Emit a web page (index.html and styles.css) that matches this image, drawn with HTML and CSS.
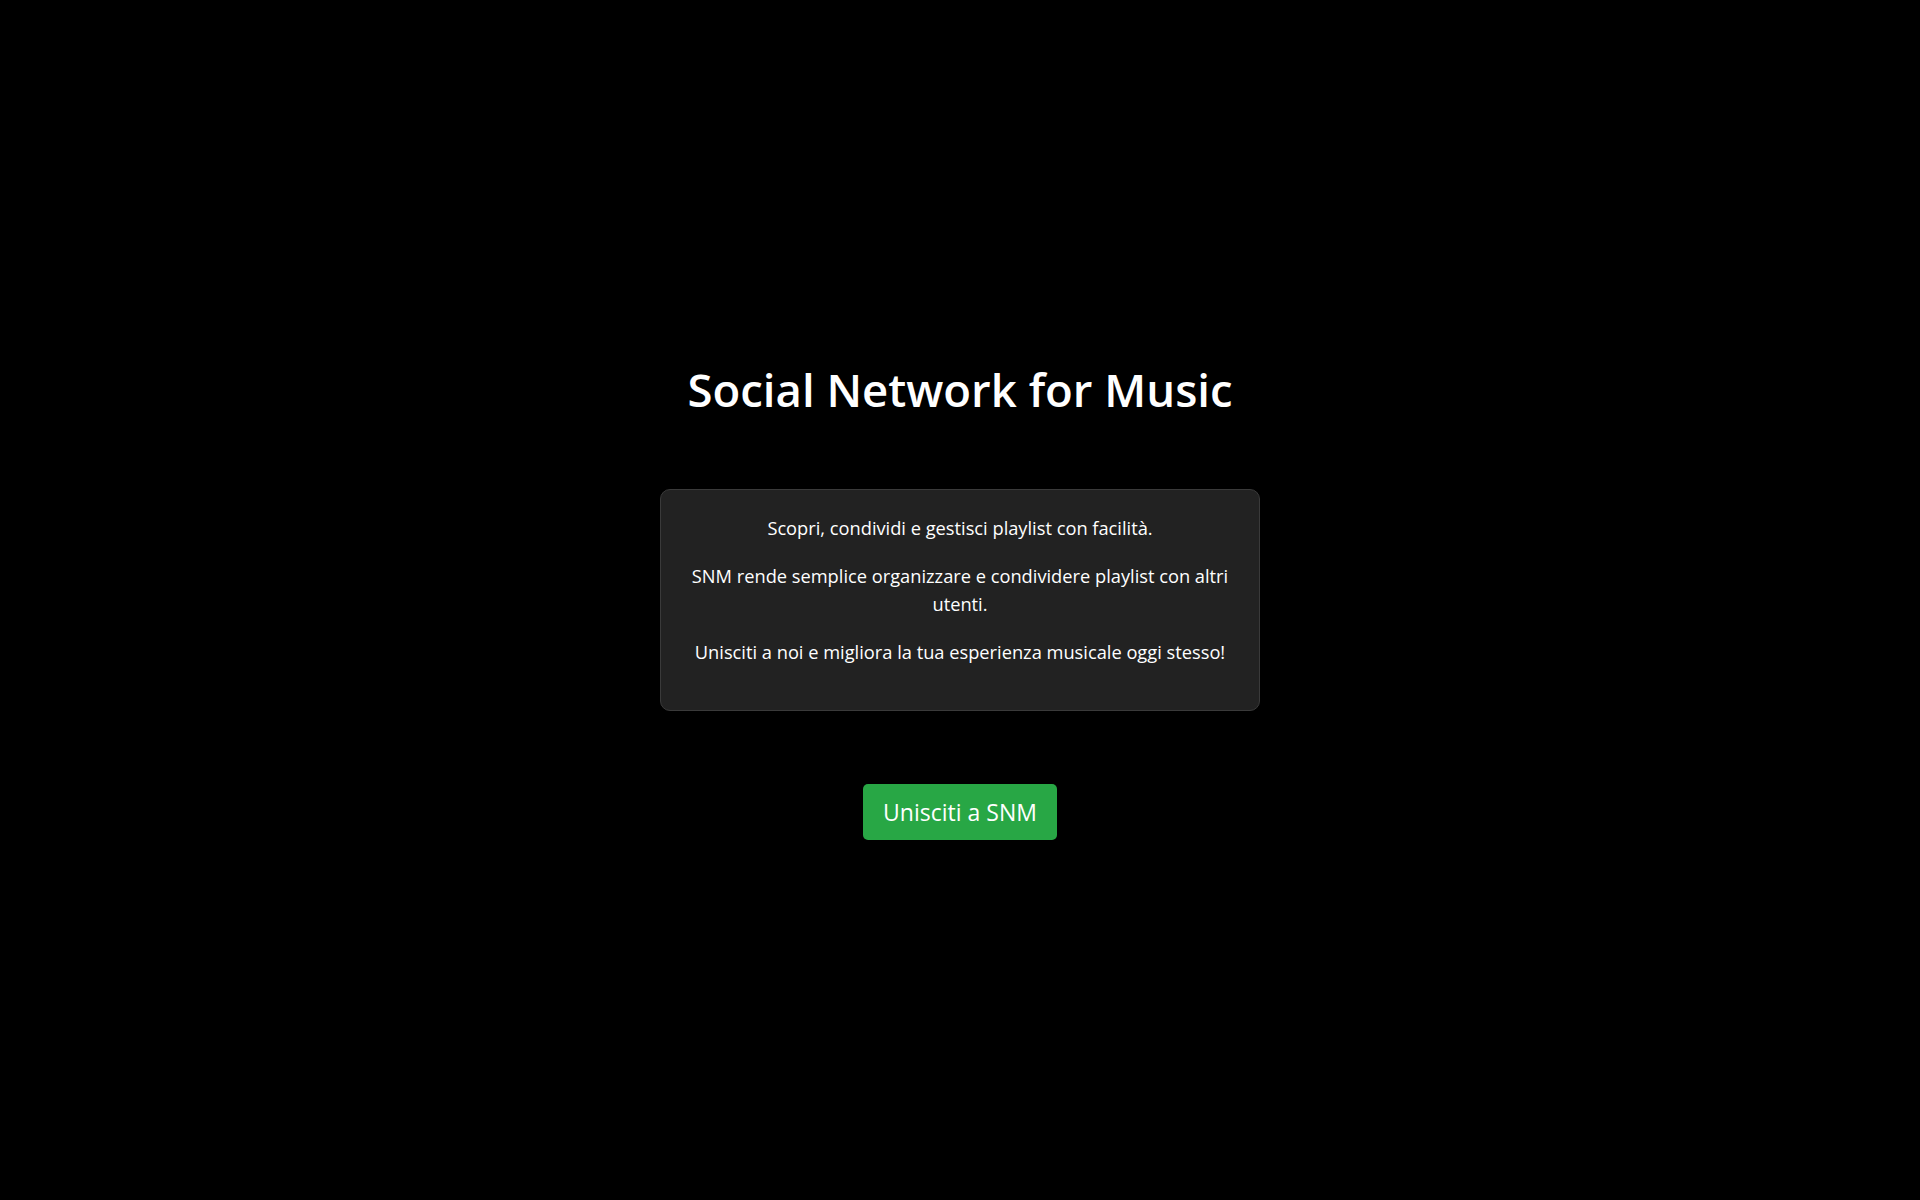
FILE: index.html
```html
<!DOCTYPE html>
<html lang="it">
<head>
    <meta charset="UTF-8">
    <meta name="viewport" content="width=device-width, initial-scale=1.0">
    <title>Social Network for Music</title>
    <link rel="stylesheet" href="styles.css">
</head>
<body>
    <div class="container">
        <h1 class="title">Social Network for Music</h1>
        <div class="intro-box">
            <p>Scopri, condividi e gestisci playlist con facilità.</p>
            <p>SNM rende semplice organizzare e condividere playlist con altri utenti.</p>
            <p>Unisciti a noi e migliora la tua esperienza musicale oggi stesso!</p>
        </div>
        <a href="#" class="join-btn">Unisciti a SNM</a>
    </div>
</body>
</html>
```

FILE: styles.css
```css
body {
    margin: 0;
    height: 100vh;
    background-color: #000;
    color: #fff;
    font-family: "Open Sans", "Noto Sans", sans-serif;
    display: flex;
    justify-content: center;
    align-items: center;
}
.container {
    display: flex;
    flex-direction: column;
    align-items: center;
}
.title {
    font-size: 45.5px;
    font-weight: 600;
    line-height: 1.3;
    margin: 0 0 69px 0;
}
.intro-box {
    width: 550px;
    padding: 24px;
    background-color: #222;
    border: 1px solid #3a3a3a;
    border-radius: 10px;
    text-align: center;
    font-size: 18.25px;
    line-height: 28px;
    margin-bottom: 73px;
}
.intro-box p {
    margin: 0 0 20px 0;
}
.join-btn {
    display: inline-block;
    background-color: #28a745;
    color: #fff;
    text-decoration: none;
    font-size: 23px;
    line-height: 36px;
    padding: 10px 20px;
    border-radius: 5px;
}
```
